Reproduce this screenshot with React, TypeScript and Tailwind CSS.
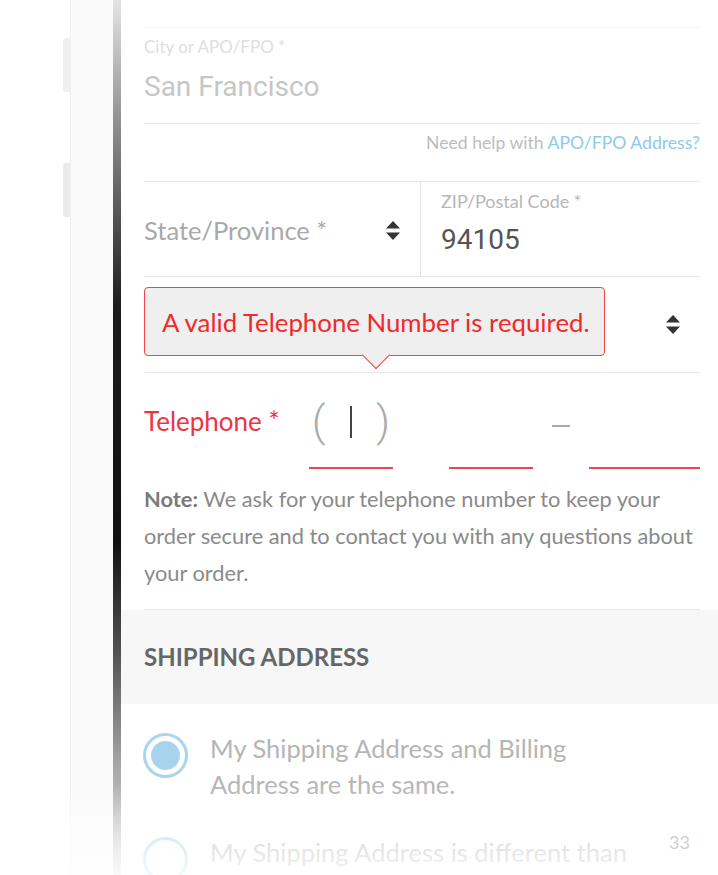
import type { ReactNode } from "react"

const UpDown = ({ className = "" }: { className?: string }) => (
    <svg width="14" height="19" viewBox="0 0 14 19" className={className}>
        <path d="M7 0 L14 7.5 L0 7.5 Z" fill="#333" />
        <path d="M0 11.5 L14 11.5 L7 19 Z" fill="#333" />
    </svg>
)

const Row = ({ className = "", children }: { className?: string; children?: ReactNode }) => (
    <div className={`border-b border-[#e6e6e6] ${className}`}>{children}</div>
)

const Radio = ({ checked }: { checked?: boolean }) => (
    <div className="mt-[3px] flex h-[45px] w-[45px] shrink-0 items-center justify-center rounded-full border-[3px] border-[#a9d6ef]">
        {checked && <div className="h-[29px] w-[29px] rounded-full bg-[#a8d3ed]" />}
    </div>
)

export default function App() {
    return (
        <div className="relative flex h-[875px] w-[718px] overflow-hidden bg-white font-['Lato',sans-serif]">
            <div className="w-[63px] shrink-0" />
            <div className="flex w-[7px] shrink-0 flex-col">
                <div className="mt-[38px] h-[54px] rounded-l-[3px] bg-[#efefef]" />
                <div className="mt-[71px] h-[54px] rounded-l-[3px] bg-[#ebebeb]" />
            </div>
            <div className="w-[43px] shrink-0 border-l border-[#f1f1f1] bg-[#fafafa]" />
            <div className="w-[8px] shrink-0 bg-[linear-gradient(to_bottom,#e4e4e4_0%,#8a8a8a_15%,#1c1c1c_35%,#111_62%,#555_75%,#aaa_88%,#d8d8d8_100%)]" />

            <div className="flex flex-1 flex-col">
                <div className="shrink-0 pl-[23px] pr-[18px]">
                    <Row className="h-[28px] border-[#f3f3f3]" />
                    <Row className="h-[96px] pt-[9px]">
                        <div className="text-[17px] leading-[20px] text-[#dedede]">City or APO/FPO *</div>
                        <div className="mt-[14px] font-['Roboto',sans-serif] text-[28px] leading-[32px] text-[#c6c6c6]">San Francisco</div>
                    </Row>
                    <Row className="h-[58px] pt-[8px] text-right text-[17.6px] leading-[22px] text-[#bdbdbd]">
                        Need help with <span className="text-[#8ccaea]">APO/FPO Address?</span>
                    </Row>
                    <Row className="flex h-[95px]">
                        <div className="flex w-[277px] items-center justify-between border-r border-[#e6e6e6] pr-[20px] pt-[2px]">
                            <span className="text-[25.5px] leading-[30px] text-[#a9a9a9]">State/Province *</span>
                            <UpDown />
                        </div>
                        <div className="pl-[20px] pt-[9px]">
                            <div className="text-[18px] leading-[20px] text-[#b6b6b6]">ZIP/Postal Code *</div>
                            <div className="mt-[13px] font-['Roboto',sans-serif] text-[28px] leading-[32px] text-[#555]">94105</div>
                        </div>
                    </Row>
                    <Row className="relative flex h-[96px] items-center justify-end pr-[20px]">
                        <UpDown />
                        <div className="absolute left-0 top-[10px] flex h-[69px] w-[461px] items-center rounded-[4px] border border-[#f24545] bg-[#efefef] pl-[17px]">
                            <span className="text-[25.8px] leading-[30px] text-[#f02a2a]">A valid Telephone Number is required.</span>
                            <div className="absolute bottom-[-10px] left-[221px] h-[20px] w-[20px] rotate-45 border-b border-r border-[#f24545] bg-[#efefef]" />
                        </div>
                    </Row>
                    <Row className="h-[237px] pt-[22px]">
                        <div className="flex h-[74px]">
                            <div className="mt-[11px] w-[165px] text-[26px] leading-[30px] text-[#ee3344]">Telephone *</div>
                            <div className="flex w-[84px] items-start justify-between border-b-2 border-[#ee4455] px-[3px] pt-[3px] font-['Roboto',sans-serif] text-[42px] font-light leading-[48px] text-[#aaa]">
                                <span>(</span>
                                <div className="mt-[8px] h-[32px] w-[2px] bg-[#444]" />
                                <span>)</span>
                            </div>
                            <div className="w-[56px]" />
                            <div className="w-[84px] border-b-2 border-[#ee4455]" />
                            <div className="flex w-[56px] justify-center pt-[30px]">
                                <div className="h-[2px] w-[18px] bg-[#aaa]" />
                            </div>
                            <div className="flex-1 border-b-2 border-[#ee4455]" />
                        </div>
                        <p className="mt-[11px] whitespace-nowrap text-[21.8px] leading-[37px] text-[#8a8a8a]">
                            <span className="font-bold text-[#7a7a7a]">Note:</span> We ask for your telephone number to keep your
                            <br />
                            order secure and to contact you with any questions about
                            <br />
                            your order.
                        </p>
                    </Row>
                </div>

                <div className="flex h-[94px] shrink-0 items-center bg-[#f7f7f7] pl-[23px]">
                    <span className="text-[24px] font-bold leading-[30px] text-[#666]">SHIPPING ADDRESS</span>
                </div>

                <div className="shrink-0 pl-[22px] pr-[18px] pt-[26px]">
                    <div className="flex gap-[22px]">
                        <Radio checked />
                        <div className="text-[25.5px] leading-[36px] text-[#b5b5b5]">
                            My Shipping Address and Billing
                            <br />
                            Address are the same.
                        </div>
                    </div>
                    <div className="mt-[32px] flex gap-[22px]">
                        <Radio />
                        <div className="whitespace-nowrap text-[25.5px] leading-[36px] text-[#b5b5b5]">My Shipping Address is different than</div>
                    </div>
                </div>
            </div>

            <div className="pointer-events-none absolute inset-x-0 bottom-0 h-[90px] bg-[linear-gradient(to_bottom,rgba(255,255,255,0)_0%,rgba(255,255,255,0.6)_65%,rgba(255,255,255,0.85)_100%)]" />
            <span className="absolute right-[28px] top-[832px] text-[18px] leading-[20px] text-[#cfcfcf]">33</span>
        </div>
    )
}
